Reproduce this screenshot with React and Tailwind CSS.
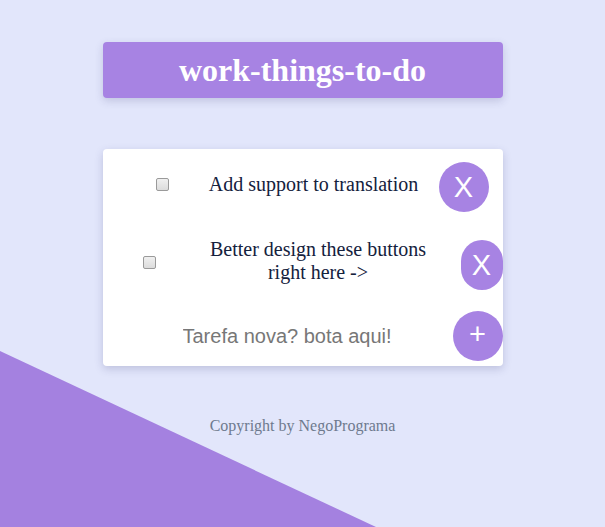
import React from 'react';

const serif = { fontFamily: '"Liberation Serif", "Times New Roman", serif' };

const RoundButton = ({ label, className = '' }) => (
  <button
    type="button"
    className={`flex shrink-0 items-center justify-center rounded-full bg-[#a783e3] text-[29px] leading-none text-white font-['Liberation_Sans',Arial,sans-serif] ${className}`}
  >
    {label}
  </button>
);

const Check = ({ className = '' }) => (
  <input
    type="checkbox"
    className={`m-0 h-[13px] w-[13px] shrink-0 appearance-none rounded-[2px] border border-[#9a9a9a] bg-gradient-to-b from-[#f0f0f0] to-[#dcdcdc] ${className}`}
  />
);

const App = () => {
  return (
    <div className="relative h-[527px] w-full overflow-hidden bg-[#e2e6fb]">
      <svg className="absolute bottom-0 left-0" width="376" height="176" viewBox="0 0 376 176">
        <polygon points="0,0 376,176 0,176" fill="#a481e0" />
      </svg>

      <div className="relative mx-auto flex w-[400px] flex-col">
        <div
          className="mt-[42px] flex h-[56px] items-center justify-center rounded-[4px] bg-[#a783e3] text-[32px] font-bold text-white shadow-[0_3px_8px_rgba(60,60,120,0.2)]"
          style={serif}
        >
          work-things-to-do
        </div>

        <div className="mt-[51px] h-[217px] rounded-[4px] bg-white pt-[13px] shadow-[0_3px_8px_rgba(60,60,120,0.22)]">
          <div className="flex h-[50px] items-center pl-[53px]">
            <Check className="-translate-y-[3px]" />
            <div className="ml-[20px] w-[250px] -translate-y-[3px] text-center text-[20px] leading-[23px] text-[#14213d]" style={serif}>
              Add support to translation
            </div>
            <RoundButton label="X" className="h-[50px] w-[50px]" />
          </div>

          <div className="mt-[28px] flex h-[50px] items-center pl-[40px]">
            <Check className="-translate-y-[3px]" />
            <div className="ml-[20px] w-[285px] -translate-y-[4px] text-center text-[20px] leading-[23px] text-[#14213d]" style={serif}>
              Better design these buttons
              <br />
              right here -&gt;
            </div>
            <RoundButton label="X" className="h-[50px] w-[42px]" />
          </div>

          <div className="mt-[21px] flex h-[50px] items-center pl-[80px]">
            <input
              type="text"
              placeholder="Tarefa nova? bota aqui!"
              className="min-w-0 flex-1 bg-transparent text-[20px] text-[#14213d] outline-none placeholder:text-[#777] font-['Liberation_Sans',Arial,sans-serif]"
            />
            <RoundButton label="+" className="h-[50px] w-[50px] pb-[3px]" />
          </div>
        </div>

        <p className="mt-[48px] text-center text-[16px] leading-[24px] text-[#6e7a8e]" style={serif}>
          Copyright by NegoPrograma
        </p>
      </div>
    </div>
  );
};

export default App;
